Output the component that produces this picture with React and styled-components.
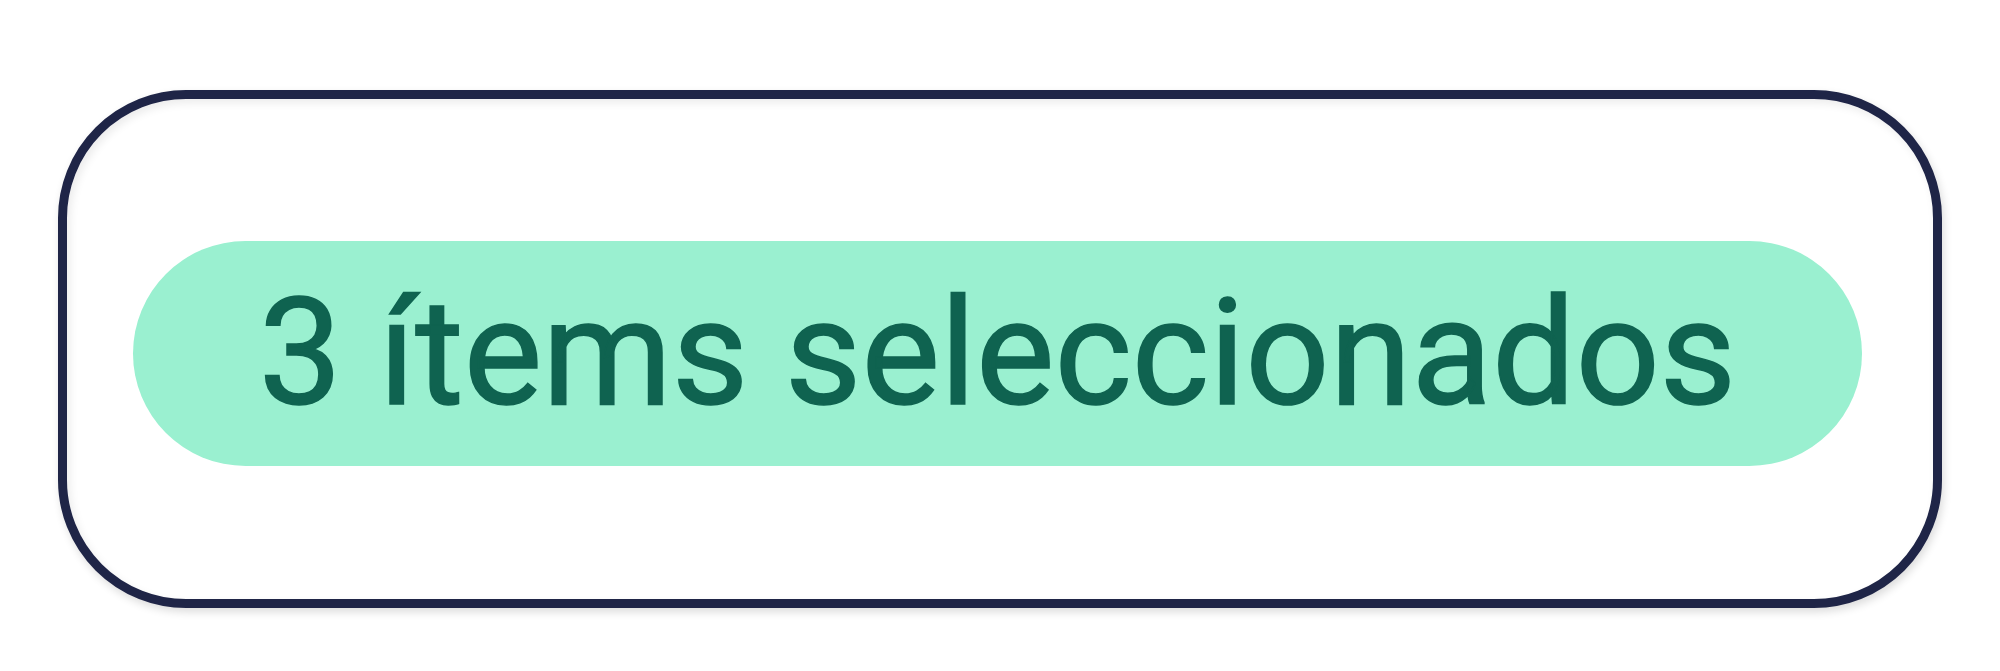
import React from "react";
import styled, { createGlobalStyle } from "styled-components";

const Global = createGlobalStyle`
  html, body { margin: 0; padding: 0; background: #ffffff; }
  body { font-family: Roboto, "Liberation Sans", sans-serif; }
`;

const Page = styled.div`
  width: 2000px;
  height: 671px;
  padding: 90px 58px 0 58px;
  box-sizing: border-box;
`;

const Card = styled.div`
  width: 1884px;
  height: 518px;
  box-sizing: border-box;
  border: 9px solid #1f2547;
  border-radius: 128px;
  background: #ffffff;
  box-shadow: 2px 4px 8px rgba(0, 0, 0, 0.14), inset 3px 4px 8px rgba(0, 0, 0, 0.08);
  display: flex;
  align-items: flex-start;
  padding: 142px 0 0 66px;
`;

const Badge = styled.div`
  width: 1729px;
  height: 225px;
  border-radius: 113px;
  background: #9af0d0;
  color: #0f6350;
  display: flex;
  align-items: center;
  justify-content: center;
  font-family: Roboto, "Liberation Sans", sans-serif;
  font-weight: 400;
  font-size: 148px;
  line-height: 1;
  white-space: nowrap;
  -webkit-text-stroke: 1.5px #0f6350;
`;

export default function App() {
  return (
    <>
      <Global />
      <Page>
        <Card>
          <Badge>3 ítems seleccionados</Badge>
        </Card>
      </Page>
    </>
  );
}
